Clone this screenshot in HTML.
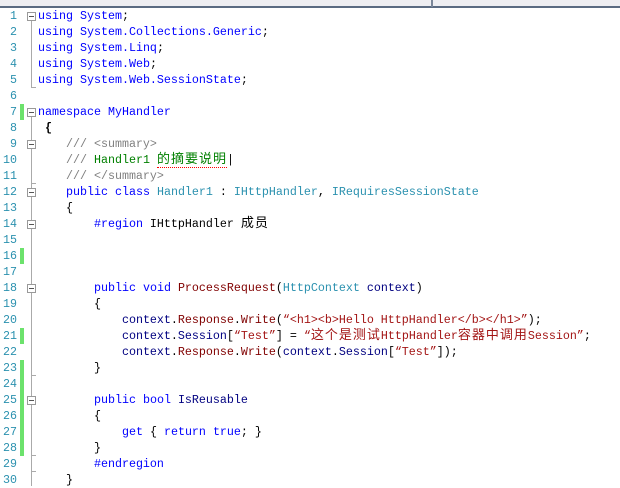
<!DOCTYPE html>
<html><head><meta charset="utf-8"><style>
body{margin:0;width:620px;height:484px;background:#fff;overflow:hidden;position:relative;font-family:"Liberation Mono","Noto Sans CJK SC",monospace;font-size:11.67px}
.top{position:absolute;left:0;top:0;width:620px;height:6px;background:#eeeef2;border-bottom:2px solid #5b6b82}
.vl{position:absolute;left:431px;top:0;width:2px;height:7px;background:#7a8699}
.l{position:absolute;left:38px;height:16px;line-height:16px;white-space:pre;color:#000}
.n{position:absolute;left:0;width:17px;text-align:right;height:16px;line-height:16px;color:#2b91af}
.g{position:absolute;left:20px;width:4px;height:16px;background:#6ce26c}
.b{position:absolute;left:27px;width:7px;height:7px;border:1px solid #999;background:#fff}
.b:after{content:"";position:absolute;left:1px;top:3px;width:5px;height:1px;background:#555}
.o{position:absolute;left:31px;width:1px;background:#aaa}
.t{position:absolute;left:31px;width:5px;height:1px;background:#aaa}
.k{color:#0000ff}.ty{color:#2b91af}.s{color:#a31515}.c{color:#008000}.x{color:#808080}.m{color:#800000}.v{color:#000080}
.z{font-size:13px;letter-spacing:1px}
.sq{border-bottom:1px dotted red}
</style></head><body>
<div class="top"></div><div class="vl"></div>
<div class="n" style="top:8px">1</div><div class="n" style="top:24px">2</div><div class="n" style="top:40px">3</div><div class="n" style="top:56px">4</div><div class="n" style="top:72px">5</div><div class="n" style="top:88px">6</div><div class="n" style="top:104px">7</div><div class="n" style="top:120px">8</div><div class="n" style="top:136px">9</div><div class="n" style="top:152px">10</div><div class="n" style="top:168px">11</div><div class="n" style="top:184px">12</div><div class="n" style="top:200px">13</div><div class="n" style="top:216px">14</div><div class="n" style="top:232px">15</div><div class="n" style="top:248px">16</div><div class="n" style="top:264px">17</div><div class="n" style="top:280px">18</div><div class="n" style="top:296px">19</div><div class="n" style="top:312px">20</div><div class="n" style="top:328px">21</div><div class="n" style="top:344px">22</div><div class="n" style="top:360px">23</div><div class="n" style="top:376px">24</div><div class="n" style="top:392px">25</div><div class="n" style="top:408px">26</div><div class="n" style="top:424px">27</div><div class="n" style="top:440px">28</div><div class="n" style="top:456px">29</div><div class="n" style="top:472px">30</div>
<div class="g" style="top:104px"></div><div class="g" style="top:248px"></div><div class="g" style="top:328px"></div><div class="g" style="top:360px;height:96px"></div>
<div class="o" style="top:20px;height:67px"></div><div class="t" style="top:87px"></div>
<div class="o" style="top:116px;height:370px"></div>
<div class="t" style="top:183px"></div><div class="t" style="top:375px"></div><div class="t" style="top:455px"></div><div class="t" style="top:471px"></div>
<div class="b" style="top:12px"></div><div class="b" style="top:108px"></div><div class="b" style="top:140px"></div><div class="b" style="top:188px"></div><div class="b" style="top:220px"></div><div class="b" style="top:284px"></div><div class="b" style="top:396px"></div>
<div class="l" style="top:8px"><span class="k">using</span> <span class="k">System</span>;</div>
<div class="l" style="top:24px"><span class="k">using</span> <span class="k">System.Collections.Generic</span>;</div>
<div class="l" style="top:40px"><span class="k">using</span> <span class="k">System.Linq</span>;</div>
<div class="l" style="top:56px"><span class="k">using</span> <span class="k">System.Web</span>;</div>
<div class="l" style="top:72px"><span class="k">using</span> <span class="k">System.Web.SessionState</span>;</div>
<div class="l" style="top:104px"><span class="k">namespace</span> <span class="k">MyHandler</span></div>
<div class="l" style="top:120px"> <b>{</b></div>
<div class="l" style="top:136px">    <span class="x">/// &lt;summary&gt;</span></div>
<div class="l" style="top:152px">    <span class="x">///</span> <span class="c">Handler1 <span class="z sq">的摘要说明</span></span>|</div>
<div class="l" style="top:168px">    <span class="x">/// &lt;/summary&gt;</span></div>
<div class="l" style="top:184px">    <span class="k">public</span> <span class="k">class</span> <span class="ty">Handler1</span> : <span class="ty">IHttpHandler</span>, <span class="ty">IRequiresSessionState</span></div>
<div class="l" style="top:200px">    {</div>
<div class="l" style="top:216px">        <span class="k">#region</span> IHttpHandler <span class="z">成员</span></div>
<div class="l" style="top:280px">        <span class="k">public</span> <span class="k">void</span> <span class="m">ProcessRequest</span>(<span class="ty">HttpContext</span> <span class="v">context</span>)</div>
<div class="l" style="top:296px">        {</div>
<div class="l" style="top:312px">            <span class="v">context</span>.<span class="m">Response</span>.<span class="m">Write</span>(<span class="s">“&lt;h1&gt;&lt;b&gt;Hello HttpHandler&lt;/b&gt;&lt;/h1&gt;”</span>);</div>
<div class="l" style="top:328px">            <span class="v">context</span>.<span class="v">Session</span>[<span class="s">“Test”</span>] = <span class="s">“<span class="z">这个是测试</span>HttpHandler<span class="z">容器中调用</span>Session”</span>;</div>
<div class="l" style="top:344px">            <span class="v">context</span>.<span class="m">Response</span>.<span class="m">Write</span>(<span class="v">context</span>.<span class="v">Session</span>[<span class="s">“Test”</span>]);</div>
<div class="l" style="top:360px">        }</div>
<div class="l" style="top:392px">        <span class="k">public</span> <span class="k">bool</span> <span class="v">IsReusable</span></div>
<div class="l" style="top:408px">        {</div>
<div class="l" style="top:424px">            <span class="k">get</span> { <span class="k">return</span> <span class="k">true</span>; }</div>
<div class="l" style="top:440px">        }</div>
<div class="l" style="top:456px">        <span class="k">#endregion</span></div>
<div class="l" style="top:472px">    }</div>
</body></html>
